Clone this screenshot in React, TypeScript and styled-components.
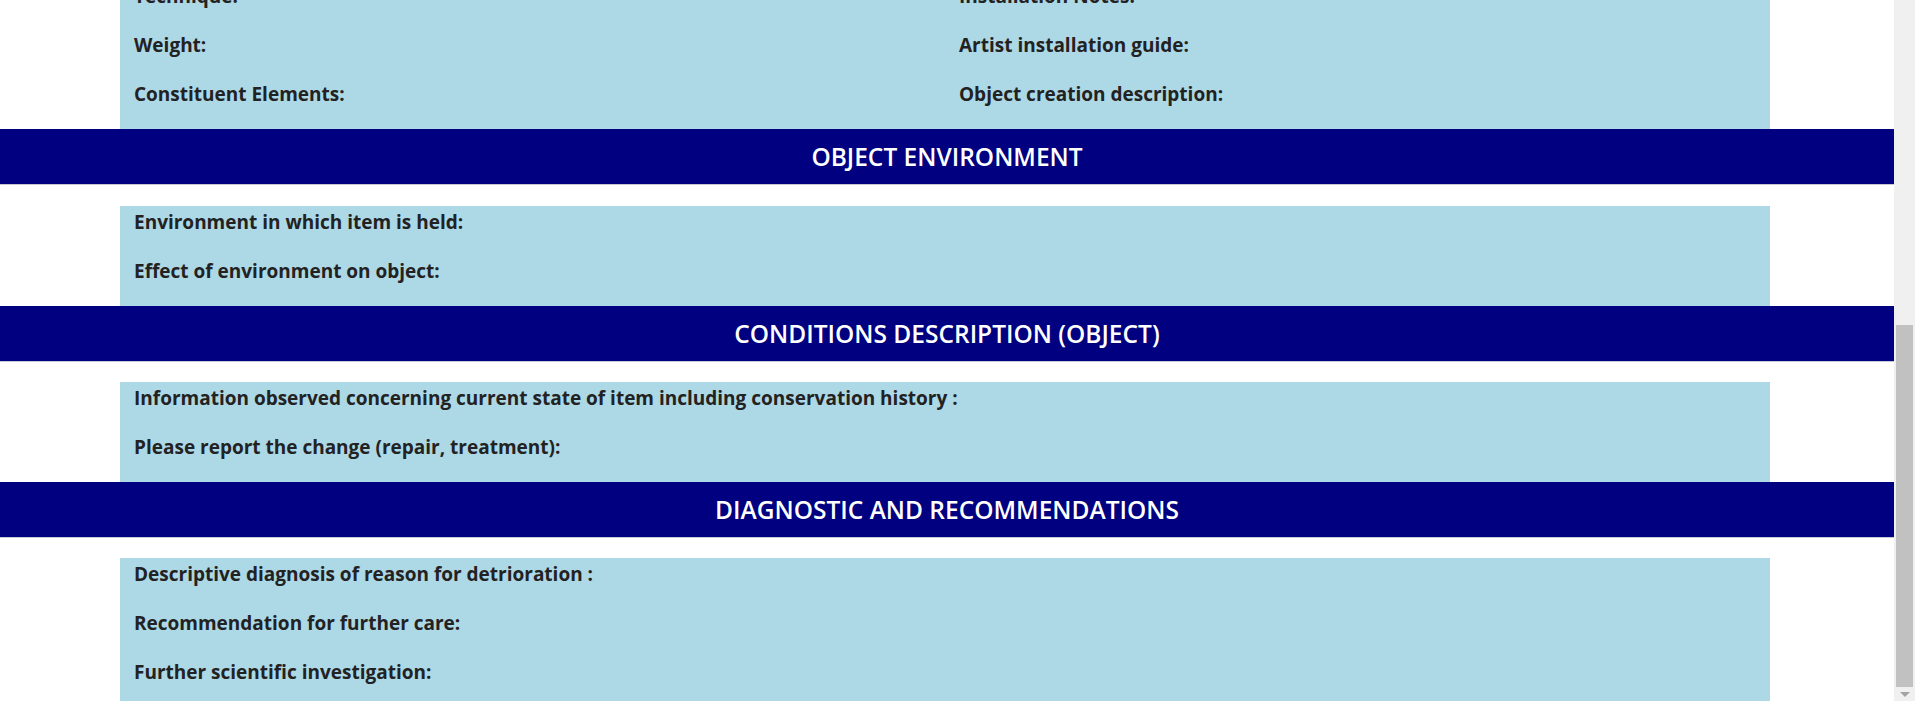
import React, { useLayoutEffect, useRef } from "react";
import styled, { createGlobalStyle } from "styled-components";

const GlobalStyle = createGlobalStyle`
  html, body {
    margin: 0;
    padding: 0;
    overflow: hidden;
    background: #ffffff;
  }
  * { box-sizing: border-box; }
`;

const Page = styled.div`
  display: flex;
  width: 1915px;
  height: 701px;
  font-family: "Open Sans", "Noto Sans", "DejaVu Sans", sans-serif;
`;

const Viewport = styled.div`
  flex: 1;
  height: 701px;
  overflow-y: scroll;
  scrollbar-width: none;
  &::-webkit-scrollbar { display: none; }
`;

const Content = styled.div`
  display: flex;
  flex-direction: column;
  padding-bottom: 40px;
`;

const SectionHeader = styled.h2<{ $gap?: number }>`
  margin: 0 0 ${(p) => p.$gap ?? 20}px;
  height: 56px;
  background: #000080;
  border-bottom: 1px solid #c8c8d4;
  color: #ffffff;
  font-size: 24.5px;
  font-weight: 600;
  display: flex;
  align-items: center;
  justify-content: center;
  letter-spacing: 0;
`;

const Panel = styled.div<{ $cols?: number }>`
  margin-left: 120px;
  width: 1650px;
  background: #add8e6;
  padding-top: 2px;
  display: grid;
  grid-template-columns: repeat(${(p) => p.$cols ?? 1}, 1fr);
`;

const Column = styled.div`
  display: flex;
  flex-direction: column;
  padding: 0 15px 0 14px;
`;

const Field = styled.div`
  height: 49px;
`;

const Label = styled.label`
  display: block;
  line-height: 28px;
  font-size: 19px;
  font-weight: 700;
  color: #222222;
  white-space: nowrap;
`;

const ScrollTrack = styled.div`
  width: 21px;
  height: 701px;
  background: #f0f0f0;
  display: flex;
  flex-direction: column;
  align-items: center;
  padding-top: 325px;
`;

const ScrollThumb = styled.div`
  width: 17px;
  height: 362px;
  background: #c1c1c1;
`;

const ScrollArrow = styled.div`
  flex: 1;
  display: flex;
  align-items: center;
  justify-content: center;
`;

const ArrowDown = styled.div`
  width: 0;
  height: 0;
  border-left: 5px solid transparent;
  border-right: 5px solid transparent;
  border-top: 5px solid #a3a3a3;
`;

const FieldList: React.FC<{ labels: string[] }> = ({ labels }) => (
  <Column>
    {labels.map((l) => (
      <Field key={l}>
        <Label>{l}</Label>
      </Field>
    ))}
  </Column>
);

export default function App() {
  const ref = useRef<HTMLDivElement>(null);
  useLayoutEffect(() => {
    if (ref.current) ref.current.scrollTop = 20;
  }, []);

  return (
    <>
      <GlobalStyle />
      <Page>
        <Viewport ref={ref}>
          <Content>
            <Panel $cols={2}>
              <FieldList labels={["Technique:", "Weight:", "Constituent Elements:"]} />
              <FieldList
                labels={[
                  "Installation Notes:",
                  "Artist installation guide:",
                  "Object creation description:",
                ]}
              />
            </Panel>

            <SectionHeader $gap={21}>OBJECT ENVIRONMENT</SectionHeader>
            <Panel>
              <FieldList
                labels={["Environment in which item is held:", "Effect of environment on object:"]}
              />
            </Panel>

            <SectionHeader>CONDITIONS DESCRIPTION (OBJECT)</SectionHeader>
            <Panel>
              <FieldList
                labels={[
                  "Information observed concerning current state of item including conservation history :",
                  "Please report the change (repair, treatment):",
                ]}
              />
            </Panel>

            <SectionHeader>DIAGNOSTIC AND RECOMMENDATIONS</SectionHeader>
            <Panel>
              <FieldList
                labels={[
                  "Descriptive diagnosis of reason for detrioration :",
                  "Recommendation for further care:",
                  "Further scientific investigation:",
                ]}
              />
            </Panel>
          </Content>
        </Viewport>
        <ScrollTrack>
          <ScrollThumb />
          <ScrollArrow>
            <ArrowDown />
          </ScrollArrow>
        </ScrollTrack>
      </Page>
    </>
  );
}
